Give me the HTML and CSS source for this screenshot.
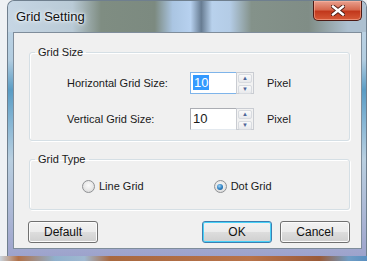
FILE: index.html
```html
<!DOCTYPE html>
<html lang="en">

<head>
  <meta charset="UTF-8" />
  <title>Grid Setting</title>
  <link rel="stylesheet" href="styles.css">
</head>

<body>
  <div class="window">
    <div class="titlebar">
      <span class="title">Grid Setting</span>
      <button class="close" aria-label="Close">
        <svg width="14" height="11" viewBox="0 0 14 11">
          <path d="M2 1.5 L12 9.5 M12 1.5 L2 9.5" stroke="#4a1a12" stroke-width="4.2" stroke-linecap="square" />
          <path d="M2 1.5 L12 9.5 M12 1.5 L2 9.5" stroke="#fff" stroke-width="2.4" stroke-linecap="square" />
        </svg>
      </button>
    </div>

    <div class="client">
      <fieldset class="group size-group">
        <legend>Grid Size</legend>
        <div class="field-row">
          <label>Horizontal Grid Size:</label>
          <div class="spin">
            <div class="spin-edit focused"><span class="sel">10</span></div>
            <div class="spin-btns">
              <span class="spin-btn">&#9650;</span>
              <span class="spin-btn">&#9660;</span>
            </div>
          </div>
          <span class="unit">Pixel</span>
        </div>
        <div class="field-row">
          <label>Vertical Grid Size:</label>
          <div class="spin">
            <div class="spin-edit">10</div>
            <div class="spin-btns">
              <span class="spin-btn">&#9650;</span>
              <span class="spin-btn">&#9660;</span>
            </div>
          </div>
          <span class="unit">Pixel</span>
        </div>
      </fieldset>

      <fieldset class="group type-group">
        <legend>Grid Type</legend>
        <div class="radio-row">
          <label class="radio"><span class="radio-dot"></span>Line Grid</label>
          <label class="radio checked"><span class="radio-dot"></span>Dot Grid</label>
        </div>
      </fieldset>

      <div class="button-row">
        <button class="btn">Default</button>
        <button class="btn btn-ok">OK</button>
        <button class="btn">Cancel</button>
      </div>
    </div>
  </div>
  <div class="desk"></div>
</body>

</html>
```

FILE: styles.css
```css
html {
  background-color: #eef1f4;
}

body {
  margin: 0;
  width: 367px;
  height: 261px;
  overflow: hidden;
  font-family: "Liberation Sans", Arial, sans-serif;
  font-size: 11px;
  color: #1a1a1a;
  background-color: #eef1f4;
}

.window {
  margin-left: 7px;
  width: 360px;
  height: 256px;
  box-sizing: border-box;
  padding: 0 4px 6px 5px;
  border: 1px solid #6f7f8e;
  border-bottom: 0;
  border-radius: 7px 7px 0 0;
  background: linear-gradient(to bottom, #c3d6e6 0%, #b3cde0 23%, #5a9cc4 35%, #84b5d4 47%, #b9cfe0 62%, #aab5d4 86%, #9da3cc 100%);
}

.titlebar {
  height: 31px;
  display: flex;
  justify-content: space-between;
  margin: 0 -4px 0 -5px;
  padding: 0 4px 0 8px;
  border-radius: 7px 7px 0 0;
  background: linear-gradient(to right, #c6d6e4 0%, #b9cad6 18%, #7f8d82 26%, #7c8a80 41%, #aac5e2 46%, #b7d1ef 51%, #677c92 54%, #b8d1ec 57%, #b4cce6 62%, #84928a 68%, #808d86 84%, #adc0d0 95%);
}

.title {
  font-size: 13px;
  color: #111;
  line-height: 31px;
  text-shadow: 0 0 6px #eef4fa, 0 0 3px #eef4fa, 0 0 2px #eef4fa;
}

.close {
  width: 49px;
  height: 20px;
  margin: 0;
  padding: 0;
  display: flex;
  align-items: center;
  justify-content: center;
  border: 1px solid #4d1a14;
  border-top: 0;
  border-radius: 0 0 5px 5px;
  background: linear-gradient(to bottom, #e9a08e 0%, #d66a50 45%, #c2381c 55%, #d65a38 100%);
  box-shadow: inset 0 0 0 1px rgba(255, 190, 170, 0.5);
}

.client {
  height: 217px;
  box-sizing: border-box;
  border: 1px solid #7f8d9b;
  background-color: #f0f0f0;
  padding: 13px 11px 0 15px;
}

.group {
  margin: 0;
  min-width: 0;
  border: 1px solid #d5dfe5;
  border-radius: 3px;
  box-shadow: inset 1px 1px 0 #fff, 1px 1px 0 #fff;
}

.group legend {
  padding: 0 3px;
  line-height: 13px;
}

.size-group {
  height: 95px;
  box-sizing: border-box;
  padding: 13px 10px 0 5px;
}

.field-row {
  display: flex;
  align-items: center;
  height: 22px;
  margin: 0 0 14px 32px;
}

.field-row label {
  width: 123px;
}

.spin {
  display: flex;
  width: 64px;
  height: 22px;
}

.spin-edit {
  flex: 1;
  box-sizing: border-box;
  border: 1px solid #abadb3;
  border-right: 0;
  border-bottom-color: #e3e9ef;
  background-color: #fff;
  font-size: 13px;
  line-height: 20px;
  padding-left: 2px;
}

.spin-edit.focused {
  border-color: #7eb4ea;
}

.sel {
  background-color: #3399ff;
  color: #fff;
  padding: 0 1px;
}

.spin-btns {
  width: 18px;
  display: flex;
  flex-direction: column;
  box-sizing: border-box;
  border: 1px solid #c9ccd2;
  background-color: #f2f2f2;
}

.spin-btn {
  flex: 1;
  margin: 1px;
  border: 1px solid #d8dbe0;
  border-radius: 2px;
  background: linear-gradient(to bottom, #fafafa, #e8e9ec);
  color: #4d6598;
  font-size: 6px;
  line-height: 7px;
  text-align: center;
}

.unit {
  margin-left: 13px;
}

.type-group {
  margin-top: 12px;
  height: 57px;
  box-sizing: border-box;
  padding: 14px 0 0 5px;
}

.radio-row {
  display: flex;
  gap: 70px;
  margin-left: 47px;
}

.radio {
  display: flex;
  align-items: center;
  gap: 4px;
  line-height: 13px;
}

.radio-dot {
  width: 13px;
  height: 13px;
  box-sizing: border-box;
  border-radius: 50%;
  border: 1px solid #8f9194;
  background: radial-gradient(circle at 50% 40%, #fafafa 0%, #e9e9e9 50%, #d2d2d2 100%);
  display: flex;
  align-items: center;
  justify-content: center;
}

.checked .radio-dot::after {
  content: "";
  width: 6px;
  height: 6px;
  border-radius: 50%;
  background: radial-gradient(circle at 40% 35%, #9ed2f5 0%, #2a7ec0 55%, #1b4f85 100%);
}

.button-row {
  display: flex;
  gap: 8px;
  margin-top: 11px;
  margin-left: -1px;
}

.btn {
  width: 70px;
  height: 22px;
  margin: 0;
  padding: 0;
  border: 1px solid #707070;
  border-radius: 3px;
  background: linear-gradient(to bottom, #f2f2f2 0%, #ebebeb 50%, #dddddd 51%, #cfcfcf 100%);
  box-shadow: inset 0 0 0 1px #fbfbfb;
  font-family: "Liberation Sans", Arial, sans-serif;
  font-size: 12px;
  color: #111;
}

.btn-ok {
  margin-left: auto;
  border-color: #3c7fb1;
  box-shadow: inset 0 0 0 1px #48d1f8;
}

.desk {
  height: 5px;
  background: linear-gradient(to right, #c9d3dc 0%, #b07048 5%, #8fb0cc 15%, #9fb8d0 23%, #a8683f 30%, #b8734a 68%, #9a5a38 87%, #6f9cc4 95%, #5a8fc0 100%);
}
```
